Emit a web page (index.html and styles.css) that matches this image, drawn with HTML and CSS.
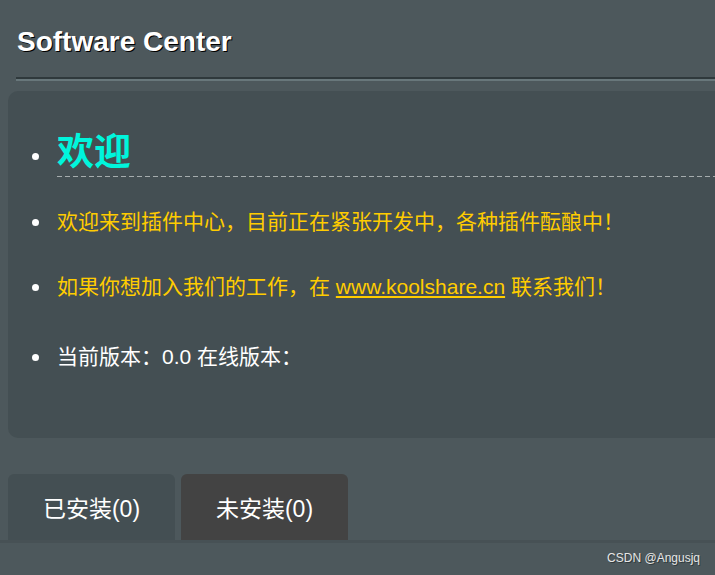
FILE: index.html
```html
<!DOCTYPE html>
<html lang="zh-CN">
<head>
<meta charset="utf-8">
<title>Software Center</title>
<link rel="stylesheet" href="styles.css">
</head>
<body>
<div class="page">
  <header class="head">
    <h1 class="title">Software Center</h1>
  </header>
  <div class="divider"></div>
  <section class="panel">
    <ul class="info">
      <li class="item welcome"><span class="welcome-text">欢迎</span></li>
      <li class="item note">欢迎来到插件中心，目前正在紧张开发中，各种插件酝酿中！</li>
      <li class="item note">如果你想加入我们的工作，在 <a class="link" href="#">www.koolshare.cn</a> 联系我们！</li>
      <li class="item version">当前版本：0.0 在线版本：</li>
    </ul>
  </section>
  <nav class="tabs">
    <div class="tab tab-installed">已安装(0)</div>
    <div class="tab tab-available">未安装(0)</div>
  </nav>
  <footer class="foot">
    <span class="mark">CSDN @Angusjq</span>
  </footer>
</div>
</body>
</html>
```

FILE: styles.css
```css
html, body {
  margin: 0;
  padding: 0;
}
body {
  background: #4d585c;
  font-family: "Liberation Sans", "Noto Sans CJK SC", sans-serif;
  color: #fff;
  width: 715px;
  height: 575px;
  overflow: hidden;
}
.page {
  display: flex;
  flex-direction: column;
}
.head {
  padding: 26px 0 0 17px;
  height: 51px;
  box-sizing: border-box;
}
.title {
  margin: 0;
  font-size: 28px;
  line-height: 32px;
  font-weight: bold;
  color: #fff;
  text-shadow: 1px 1px 0 #000;
}
.divider {
  margin-left: 16px;
  margin-top: 26px;
  height: 2px;
  background: #2f393c;
  box-shadow: 0 2px 0 #68777b;
}
.panel {
  margin: 12px 0 0 8px;
  height: 347px;
  background: #444f53;
  border-radius: 10px 0 0 10px;
  padding-top: 40px;
  box-sizing: border-box;
}
.info {
  margin: 0;
  padding: 0 0 0 49px;
  list-style: none;
}
.item {
  position: relative;
  font-size: 21px;
  line-height: 26px;
}
.item::before {
  content: "";
  position: absolute;
  left: -25px;
  top: 10px;
  width: 7px;
  height: 7px;
  border-radius: 50%;
  background: #fff;
}
.welcome {
  height: 46px;
  line-height: 44px;
  background: repeating-linear-gradient(to right, #a5acad 0 5px, transparent 5px 8px) left bottom / 100% 1px no-repeat;
}
.welcome::before {
  top: 22px;
}
.welcome-text {
  font-size: 37px;
  font-weight: bold;
  color: #00f5dc;
}
.note {
  color: #ffcc00;
}
.welcome + .note {
  margin-top: 32px;
}
.note + .note {
  margin-top: 39px;
}
.link {
  color: #ffcc00;
  text-decoration: underline;
}
.version {
  margin-top: 44px;
  color: #fff;
}
.tabs {
  display: flex;
  gap: 6px;
  margin-top: 36px;
  padding-left: 8px;
  border-bottom: 3px solid #475155;
}
.tab {
  width: 167px;
  height: 66px;
  display: flex;
  align-items: center;
  justify-content: center;
  border-radius: 6px 6px 0 0;
  font-size: 23px;
  color: #fff;
}
.tab-installed {
  background: #444f53;
}
.tab-available {
  background: #434343;
}
.foot {
  display: flex;
  justify-content: flex-end;
  padding: 8px 15px 0 0;
}
.mark {
  font-size: 12px;
  color: #e6e6e6;
  text-shadow: 1px 1px 0 #2f383b;
}
```
